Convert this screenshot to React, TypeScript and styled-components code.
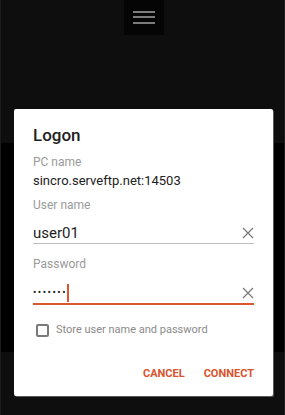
import React from "react";
import styled, { createGlobalStyle } from "styled-components";

const Global = createGlobalStyle`
  html, body { margin: 0; padding: 0; background: #0e0e0e; }
  body { font-family: Roboto, "Noto Sans", sans-serif; -webkit-font-smoothing: antialiased; }
`;

const Page = styled.div`
  position: relative;
  width: 285px;
  height: 415px;
  overflow: hidden;
  background: #0e0e0e;
  display: flex;
  flex-direction: column;
  box-sizing: border-box;
  border-left: 1px solid #1c1c1c;
  border-right: 1px solid #1c1c1c;
`;

const Header = styled.div`
  height: 143px;
  display: flex;
  justify-content: center;
  align-items: flex-start;
  padding-left: 2px;
`;

const MenuButton = styled.div`
  width: 40px;
  height: 35px;
  background: #050505;
  display: flex;
  flex-direction: column;
  align-items: center;
  justify-content: center;
  gap: 3.5px;
  padding-bottom: 1px;
  box-sizing: border-box;
`;

const MenuLine = styled.span`
  display: block;
  width: 22px;
  height: 2px;
  background: #7c7c7c;
`;

const Band = styled.div`
  height: 209px;
  background: #000;
`;

const Dialog = styled.div`
  position: absolute;
  left: 13px;
  top: 109px;
  width: 259px;
  height: 287px;
  background: #fff;
  border-radius: 2px;
  box-shadow: 1px 1px 0 #5a5a5a;
  box-sizing: border-box;
  padding: 14px 19px 14px 19px;
  display: flex;
  flex-direction: column;
`;

const Title = styled.div`
  font-size: 17px;
  line-height: 24px;
  color: #212121;
  font-weight: 500;
`;

const Label = styled.div<{ $mt: number }>`
  margin-top: ${(p) => p.$mt}px;
  font-size: 12px;
  line-height: 16px;
  color: #9a9a9a;
`;

const Value = styled.div`
  margin-top: 3px;
  font-size: 13px;
  line-height: 16px;
  color: #222;
`;

const Field = styled.div<{ $active?: boolean; $mt: number }>`
  margin-top: ${(p) => p.$mt}px;
  display: flex;
  align-items: center;
  height: 20px;
  border-bottom: ${(p) => (p.$active ? "2px solid #dc5530" : "1px solid #bdbdbd")};
`;

const FieldText = styled.span`
  flex: 1;
  font-size: 15px;
  line-height: 20px;
  color: #1e1e1e;
  display: flex;
  align-items: center;
`;

const Dots = styled.span`
  font-size: 10px;
  letter-spacing: 1.5px;
  color: #222;
  line-height: 20px;
`;

const Caret = styled.span`
  display: inline-block;
  width: 2px;
  height: 18px;
  background: #dc5530;
`;

const ClearIcon = styled.svg`
  width: 12px;
  height: 12px;
  flex: none;
`;

const CheckRow = styled.div`
  margin-top: 17px;
  display: flex;
  align-items: center;
  gap: 7px;
  padding-left: 3px;
  height: 16px;
`;

const CheckBox = styled.span`
  width: 13px;
  height: 13px;
  box-sizing: border-box;
  border: 2px solid #7a7a7a;
  border-radius: 2px;
`;

const CheckLabel = styled.span`
  font-size: 11px;
  color: #8a8a8a;
  line-height: 16px;
`;

const Actions = styled.div`
  margin-top: 28px;
  display: flex;
  justify-content: flex-end;
  gap: 19px;
`;

const ActionButton = styled.span`
  font-size: 11px;
  line-height: 16px;
  font-weight: 700;
  color: #d9532d;
`;

const Clear = () => (
  <ClearIcon viewBox="0 0 12 12">
    <path d="M1 1 L11 11 M11 1 L1 11" stroke="#7a7a7a" strokeWidth="1.3" fill="none" />
  </ClearIcon>
);

export default function App() {
  return (
    <>
      <Global />
      <Page>
        <Header>
          <MenuButton>
            <MenuLine />
            <MenuLine />
            <MenuLine />
          </MenuButton>
        </Header>
        <Band />
        <Dialog>
          <Title>Logon</Title>
          <Label $mt={7}>PC name</Label>
          <Value>sincro.serveftp.net:14503</Value>
          <Label $mt={8}>User name</Label>
          <Field $mt={10}>
            <FieldText>user01</FieldText>
            <Clear />
          </Field>
          <Label $mt={12}>Password</Label>
          <Field $mt={11} $active>
            <FieldText>
              <Dots>•••••••</Dots>
              <Caret />
            </FieldText>
            <Clear />
          </Field>
          <CheckRow>
            <CheckBox />
            <CheckLabel>Store user name and password</CheckLabel>
          </CheckRow>
          <Actions>
            <ActionButton>CANCEL</ActionButton>
            <ActionButton>CONNECT</ActionButton>
          </Actions>
        </Dialog>
      </Page>
    </>
  );
}
